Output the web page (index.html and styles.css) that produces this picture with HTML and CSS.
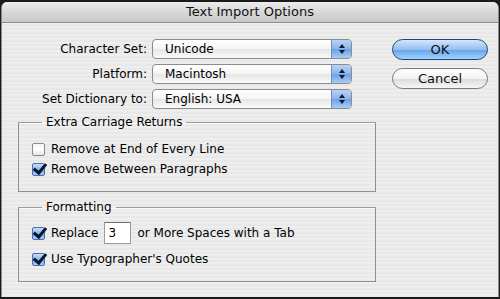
FILE: index.html
```html
<!DOCTYPE html>
<html lang="en">

<head>
    <meta charset="UTF-8">
    <title>Text Import Options</title>
    <link rel="stylesheet" href="styles.css">
</head>

<body>
    <div class="window">
        <div class="titlebar">Text Import Options</div>
        <div class="content">
            <div class="main">
                <div class="form">
                    <label>Character Set:</label>
                    <div class="popup"><span>Unicode</span><i class="arrows"></i></div>
                    <label>Platform:</label>
                    <div class="popup"><span>Macintosh</span><i class="arrows"></i></div>
                    <label>Set Dictionary to:</label>
                    <div class="popup"><span>English: USA</span><i class="arrows"></i></div>
                </div>
                <fieldset class="group first">
                    <legend>Extra Carriage Returns</legend>
                    <div class="check"><span class="box"></span>Remove at End of Every Line</div>
                    <div class="check"><span class="box on"></span>Remove Between Paragraphs</div>
                </fieldset>
                <fieldset class="group second">
                    <legend>Formatting</legend>
                    <div class="check tall"><span class="box on"></span>Replace <input type="text" value="3"> or More Spaces with a Tab</div>
                    <div class="check after"><span class="box on"></span>Use Typographer's Quotes</div>
                </fieldset>
            </div>
            <div class="buttons">
                <button class="btn default">OK</button>
                <button class="btn">Cancel</button>
            </div>
        </div>
    </div>
</body>

</html>
```
FILE: styles.css
```css
body {
    margin: 0;
    background: #1a1a1a;
    font-family: "DejaVu Sans", sans-serif;
    font-size: 12px;
    color: #000;
}

.window {
    width: 498px;
    height: 295px;
    margin: 2px 0 0 1px;
    border-radius: 6px 6px 0 0;
    overflow: hidden;
    background: repeating-linear-gradient(#eeeeee 0, #eeeeee 2px, #e8e8e8 2px, #e8e8e8 4px);
    border-left: 1px solid #8a8a8a;
    border-right: 1px solid #8a8a8a;
    box-sizing: border-box;
}

.titlebar {
    height: 20px;
    line-height: 20px;
    text-align: center;
    font-size: 13px;
    background: linear-gradient(#ececec, #d4d4d4 60%, #c8c8c8);
    border-bottom: 1px solid #8e8e8e;
    color: #111;
}

.content {
    display: flex;
    padding: 16px 0 0 16px;
}

.main {
    width: 358px;
}

.form {
    display: grid;
    grid-template-columns: 129px 200px;
    column-gap: 5px;
    row-gap: 5px;
}

.form label {
    text-align: right;
    line-height: 20px;
}

.popup {
    display: flex;
    height: 20px;
    box-sizing: border-box;
    border: 1px solid #8c8c8c;
    border-radius: 4px;
    background: linear-gradient(#ffffff, #f4f4f4 50%, #e6e6e6 52%, #fafafa);
    overflow: hidden;
}

.popup span {
    flex: 1;
    padding-left: 12px;
    line-height: 18px;
}

.arrows {
    width: 19px;
    border-left: 1px solid #6d8fc4;
    background: linear-gradient(#b9d3f4, #8bb4ea 50%, #6ea0e4 52%, #a9ccf8);
    position: relative;
}

.arrows::before,
.arrows::after {
    content: "";
    position: absolute;
    left: 7px;
    border-left: 3px solid transparent;
    border-right: 3px solid transparent;
}

.arrows::before {
    top: 4px;
    border-bottom: 4px solid #0c1a3a;
}

.arrows::after {
    top: 10px;
    border-top: 4px solid #0c1a3a;
}

.group {
    margin: 0;
    padding: 9px 0 12px 13px;
    border: 1px solid #8f8f8f;
    border-top-color: #9c9c9c;
    box-shadow: inset 0 1px 0 #fafafa;
}

.group legend {
    padding: 0 4px;
    margin-left: 10px;
    line-height: 16px;
}

.first {
    margin-top: 5px;
}

.second {
    margin-top: 7px;
    padding-top: 5px;
}

.check {
    display: flex;
    align-items: center;
    height: 20px;
    white-space: nowrap;
}

.check.tall {
    height: 26px;
}

.check.after {
    margin-top: 3px;
}

.box {
    width: 13px;
    height: 13px;
    box-sizing: border-box;
    margin-right: 6px;
    border: 1px solid #8a8a8a;
    border-radius: 2px;
    background: linear-gradient(#f6f6f6, #ffffff 50%, #e4e4e4);
}

.box.on {
    border-color: #4a6fa8;
    background: linear-gradient(#c6dcf8, #8db7ec 50%, #6aa0e6 52%, #a8cef8);
    position: relative;
}

.box.on::after {
    content: "";
    position: absolute;
    left: 3px;
    top: -3px;
    width: 5px;
    height: 10px;
    border-right: 3px solid #0b1530;
    border-bottom: 3px solid #0b1530;
    transform: rotate(40deg);
}

.check input {
    width: 27px;
    height: 22px;
    box-sizing: border-box;
    margin: 0 6px;
    padding: 0 3px;
    border: 1px solid #9a9a9a;
    border-top-color: #6f6f6f;
    font: inherit;
    background: #fff;
}

.buttons {
    display: flex;
    flex-direction: column;
    gap: 8px;
    margin-left: 16px;
}

.btn {
    width: 96px;
    height: 21px;
    border-radius: 11px;
    border: 1px solid #7a7a7a;
    background: linear-gradient(#ffffff, #f2f2f2 50%, #dcdcdc 52%, #f6f6f6);
    font: inherit;
    font-size: 13px;
    padding: 0;
    color: #111;
}

.btn.default {
    border-color: #28407a;
    background: linear-gradient(#d4e6fb, #93c0f2 50%, #6aa4ea 52%, #9ed2fc);
}
```
